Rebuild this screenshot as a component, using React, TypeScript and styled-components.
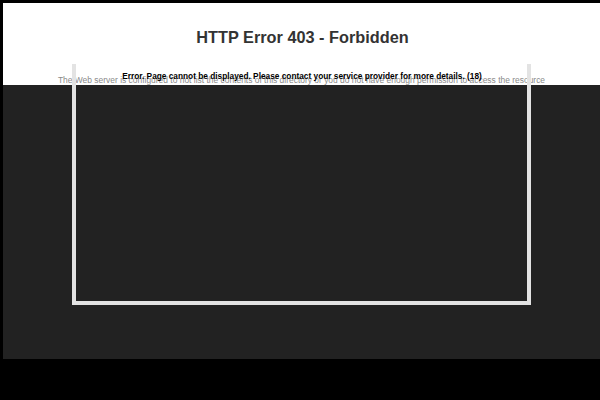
import React from 'react'
import styled, { createGlobalStyle } from 'styled-components';

const GlobalStyle = createGlobalStyle`
    html, body {
        margin: 0;
        padding: 0;
        background: #000000;
        width: 600px;
        height: 400px;
        overflow: hidden;
    }
`;

const Page = styled.div`
    position: relative;
    margin: 3px 0 0 3px;
    width: 597px;
    height: 356px;
    display: flex;
    flex-direction: column;
    background: #222222;
    font-family: "Liberation Sans", Arial, sans-serif;
`;

const Header = styled.header`
    height: 82px;
    background: #ffffff;
    display: flex;
    flex-direction: column;
    align-items: center;
    box-sizing: border-box;
    padding-top: 24px;
`;

const Title = styled.h1`
    margin: 0;
    font-size: 16.3px;
    font-weight: bold;
    color: #333333;
    line-height: 20px;
    padding-left: 2px;
`;

const Message = styled.p`
    margin: 27px 0 0 0;
    font-size: 8.45px;
    line-height: 12px;
    color: #8a8a8a;
    white-space: nowrap;
`;

const Frame = styled.div`
    position: absolute;
    left: 69px;
    top: 61px;
    width: 459px;
    height: 241px;
    box-sizing: border-box;
    border: 4px solid #e3e3e3;
    border-top: none;
    display: flex;
    justify-content: center;
`;

const Notice = styled.div`
    margin-top: 7px;
    font-size: 8.3px;
    font-weight: bold;
    color: #000000;
    line-height: 10px;
    white-space: nowrap;
    padding-left: 1px;
`;

export default function App() {
    return (
        <>
            <GlobalStyle />
            <Page>
                <Header>
                    <Title>HTTP Error 403 - Forbidden</Title>
                    <Message>The Web server is configured to not list the contents of this directory or you do not have enough permission to access the resource</Message>
                </Header>
                <Frame>
                    <Notice>Error. Page cannot be displayed. Please contact your service provider for more details. (18)</Notice>
                </Frame>
            </Page>
        </>
    )
}
